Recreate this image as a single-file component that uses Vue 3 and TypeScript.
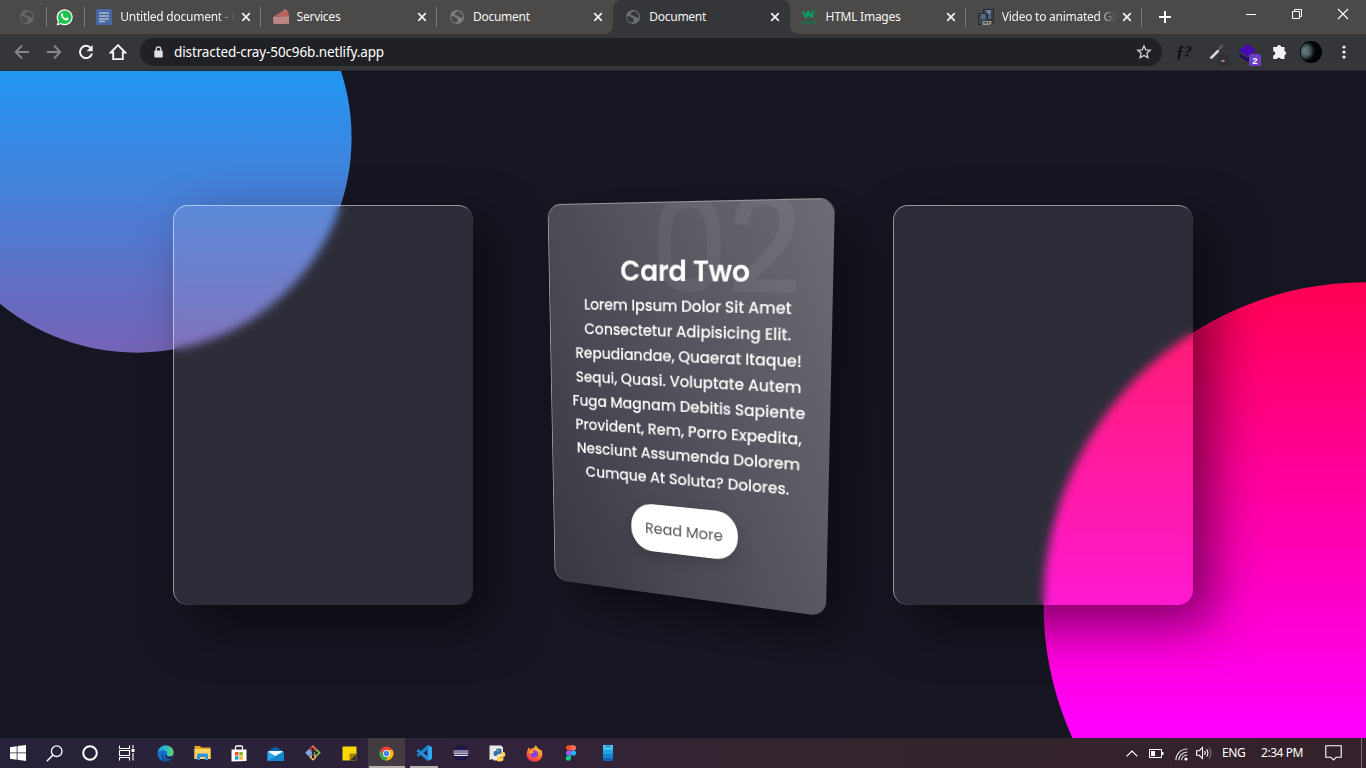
<script setup lang="ts">
interface Tab {
  title: string
  icon: 'docs' | 'cake' | 'globe' | 'w3' | 'film'
  active?: boolean
  divider?: boolean
  fade?: boolean
}

const tabs: Tab[] = [
  { title: 'Untitled document - Google', icon: 'docs', divider: true, fade: true },
  { title: 'Services', icon: 'cake', divider: true },
  { title: 'Document', icon: 'globe' },
  { title: 'Document', icon: 'globe', active: true },
  { title: 'HTML Images', icon: 'w3', divider: true },
  { title: 'Video to animated GIF', icon: 'film', divider: true, fade: true },
]

const lines: string[] = [
  'Lorem Ipsum Dolor Sit Amet',
  'Consectetur Adipisicing Elit.',
  'Repudiandae, Quaerat Itaque!',
  'Sequi, Quasi. Voluptate Autem',
  'Fuga Magnam Debitis Sapiente',
  'Provident, Rem, Porro Expedita,',
  'Nesciunt Assumenda Dolorem',
  'Cumque At Soluta? Dolores.',
]
</script>

<template>
  <div class="screen">
    <header class="tabstrip">
      <div class="pinned divided">
        <svg class="globe dim" width="16" height="16" viewBox="0 0 16 16"><circle cx="8" cy="8" r="7" fill="#696b6e" /><path d="M2.500 7c2 0 2.500 1 4 1.300 1.200.2 1 1.500 2.200 1.700v2.300L7 13.800C4 13.500 2 11 2.200 8zM7 3.200c1-.9 3-.9 4.200-.3L13.600 6v2.700c-1.300.6-2.200 0-2.500-1-1 .2-2.400-.2-2.700-1.200L6 6.200C5.500 5 6 3.800 7 3.200z" fill="#4c4a48" /></svg>
      </div>
      <div class="pinned divided wa">
        <svg width="17" height="17" viewBox="0 0 17 17"><path d="M.6 16.500l1.200-4.100A8 8 0 1 1 4.800 15.300z" fill="#fff" /><circle cx="8.700" cy="8.200" r="6.800" fill="#20c04d" /><path d="M2.200 14.800l.9-3.200 2.400 2.400z" fill="#20c04d" /><path d="M5.600 4.600c.8-.7 1.300-.2 1.600.7.300.8-.3 1-.4 1.400.6 1.300 1.600 2.200 2.900 2.700.5-.3.700-1.100 1.300-.9 1.400.6 1.900.8 1.300 1.900-1 1.600-2.900 1-4.600 0C5.900 9.200 4.100 6.200 5.600 4.600z" fill="#fff" /></svg>
      </div>
      <div v-for="(t, i) in tabs" :key="i" class="tab" :class="{ active: t.active, divided: t.divider }">
        <svg v-if="t.icon === 'docs'" class="fav" width="16" height="16" viewBox="0 0 16 16"><rect width="16" height="16" rx="1" fill="#4767a5" /><path d="M3 4h10M3 7h10M3 10h10M3 12.500h6" stroke="#b0b9c9" stroke-width="1.500" /></svg>
        <svg v-else-if="t.icon === 'cake'" class="fav" width="16" height="16" viewBox="0 0 16 16"><path d="M0 8L11 1l3.500.5L16 6v1z" fill="#b9605d" /><path d="M10.500 1l2.300-.8.700 1.600z" fill="#e1aaa5" /><path d="M0 8l16-1v8H.5z" fill="#b98480" /><path d="M0 9.200l16-.7M.5 12l15.500-.5" stroke="#c4928d" stroke-width=".9" /></svg>
        <svg v-else-if="t.icon === 'globe'" class="fav" width="16" height="16" viewBox="0 0 16 16"><circle cx="8" cy="8" r="7" :fill="t.active ? '#6b6f75' : '#7d7e80'" /><path d="M2.500 7c2 0 2.500 1 4 1.300 1.200.2 1 1.500 2.200 1.700v2.300L7 13.800C4 13.500 2 11 2.200 8zM7 3.200c1-.9 3-.9 4.200-.3L13.600 6v2.700c-1.300.6-2.200 0-2.500-1-1 .2-2.400-.2-2.700-1.200L6 6.200C5.500 5 6 3.800 7 3.200z" :fill="t.active ? '#35363a' : '#4c4a48'" /></svg>
        <svg v-else-if="t.icon === 'w3'" class="fav" width="17" height="17" viewBox="0 0 17 17"><path d="M.8 2.200h2.400l1.600 3.400 1.800-3.400h2l1.500 3.200 1.500-3.200h1.600v7.600h-1.500L11.500 8 9.700 9.900 7.800 7 6 9.900H4.300z" fill="#0a9a63" /><path d="M13.300 1h2.400l-1.200 1.500c1.500.2 1.500 2.300-.9 2" fill="none" stroke="#0a8558" stroke-width=".9" /><text x="0" y="15.600" class="w3word" textLength="16.500" lengthAdjust="spacingAndGlyphs">schools</text></svg>
        <svg v-else class="fav" width="16" height="16" viewBox="0 0 16 16"><rect x="5.500" y=".5" width="10" height="10" fill="#4d6280" stroke="#25272b" /><path d="M7 0v10M14 0v10" stroke="#292b2e" stroke-width="1.800" stroke-dasharray="1.300 .8" /><path d="M8 1h5v4H8z" fill="#6b7f98" /><rect x=".5" y="4.500" width="9" height="11" fill="#536983" stroke="#26282c" /><path d="M2 4v11M8.500 4v7" stroke="#292b2e" stroke-width="1.800" stroke-dasharray="1.300 .8" /><path d="M3 10.500h13V16H3z" fill="#3b3b3d" /><text x="4" y="15.500" class="gifword">GIF</text></svg>
        <span class="title" :class="{ fade: t.fade }">{{ t.title }}</span>
        <svg class="close" width="10" height="10" viewBox="0 0 10 10"><path d="M1.200 1.200l7.600 7.600M8.800 1.200L1.200 8.800" stroke="#f1f1f1" stroke-width="1.700" /></svg>
      </div>
      <svg class="plus" width="14" height="14" viewBox="0 0 14 14"><path d="M7 1v12M1 7h12" stroke="#fff" stroke-width="2" /></svg>
      <div class="winbtns">
        <svg width="12" height="12" viewBox="0 0 12 12"><path d="M1 6.500h10" stroke="#fff" /></svg>
        <svg width="12" height="12" viewBox="0 0 12 12"><path d="M1.500 3.500h7v7h-7zM3.500 3.500v-2h7v7h-2" fill="none" stroke="#fff" /></svg>
        <svg width="12" height="12" viewBox="0 0 12 12"><path d="M1 1l10 10M11 1L1 11" stroke="#fff" stroke-width="1.100" /></svg>
      </div>
    </header>

    <div class="toolbar">
      <div class="nav">
        <svg width="16" height="16" viewBox="0 0 16 16"><path d="M15 8H2M8 1.500L1.700 8 8 14.500" fill="none" stroke="#86888a" stroke-width="1.800" /></svg>
        <svg width="16" height="16" viewBox="0 0 16 16"><path d="M1 8h13M8 1.500L14.300 8 8 14.500" fill="none" stroke="#86888a" stroke-width="1.800" /></svg>
        <svg width="16" height="16" viewBox="0 0 16 16"><path d="M13.200 4.600A6.100 6.100 0 1 0 14 9.500" fill="none" stroke="#f1f3f4" stroke-width="2" /><path d="M14.700 1v6.200H8.500z" fill="#f1f3f4" /></svg>
        <svg width="18" height="18" viewBox="0 0 18 18"><path d="M1.800 9.500L9 2l7.200 7.500h-2.400v6.600H4.200V9.500z" fill="none" stroke="#f1f3f4" stroke-width="1.900" /></svg>
      </div>
      <div class="omnibox">
        <svg class="lock" width="9" height="12" viewBox="0 0 9 12"><rect x=".3" y="4.500" width="8.400" height="7" rx=".8" fill="#dfe1e5" /><path d="M2.200 5V3.200a2.300 2.300 0 0 1 4.600 0V5" fill="none" stroke="#dfe1e5" stroke-width="1.300" /></svg>
        <span class="url">distracted-cray-50c96b.netlify.app</span>
        <svg class="star" width="16" height="16" viewBox="0 0 16 16"><path d="M8 1.900l1.800 4 4.400.4-3.300 2.900 1 4.400L8 11.400l-3.900 2.200 1-4.400-3.300-2.900 4.400-.4z" fill="none" stroke="#d2d4d7" stroke-width="1.300" /></svg>
      </div>
      <div class="exts">
        <span class="fq">ƒ?</span>
        <svg class="picker" width="21" height="22" viewBox="0 0 21 22"><path d="M2 13.500L10.500 5l1.500 1.500L3.500 15z" fill="#e6e6e2" stroke="#bdbdb7" stroke-width=".8" /><path d="M9.500 4l3.500 3.500" stroke="#202124" stroke-width="1.600" /><path d="M11.500 4.500L14 1.800" stroke="#55585c" stroke-width="3" stroke-linecap="round" /><rect x="9.500" y="11" width="11.500" height="11" rx="1" fill="#303134" /><path d="M13.500 17h3" stroke="#f5d0d0" stroke-width="1.200" /><path d="M15.200 17h1.300" stroke="#e33" stroke-width="1.200" /></svg>
        <svg class="layers" width="23" height="23" viewBox="0 0 23 23"><path d="M1.500 10.500l8 5 8-5v3l-8 5-8-5z" fill="#210075" /><path d="M9.500 1L18 7.500l-8.500 6L1 7.500z" fill="#4709b2" /><rect x="11" y="11" width="12" height="12" rx="1.500" fill="#6c3cc4" /><text x="14.200" y="20.500" class="badge">2</text></svg>
        <svg class="puzzle" width="16" height="16" viewBox="0 0 16 16"><path d="M5 3a2.100 2.100 0 0 1 4.200 0h3.300v3.900a2.200 2.200 0 0 1 0 4.300v3.900H8.900a2 2 0 0 0-3.900 0H1.200v-3.700a2.100 2.100 0 0 0 0-4.200V3z" fill="#f1f3f4" /></svg>
        <svg class="avatar" width="22" height="22" viewBox="0 0 22 22"><defs><radialGradient id="planet" cx=".2" cy=".45" r=".6"><stop offset="0" stop-color="#64808a" /><stop offset=".5" stop-color="#3b535a" /><stop offset=".8" stop-color="#0b1113" /><stop offset="1" stop-color="#020303" /></radialGradient></defs><circle cx="11" cy="11" r="11" fill="#020303" /><circle cx="10.500" cy="11" r="9.800" fill="url(#planet)" /><path d="M3 8c3-1.500 5 0 7-2M3 12c3 0 5 2 8 1" fill="none" stroke="#8a7a58" stroke-width=".9" opacity=".7" /></svg>
        <svg class="dots" width="4" height="16" viewBox="0 0 4 16"><circle cx="2" cy="3" r="1.600" fill="#f1f3f4" /><circle cx="2" cy="8" r="1.600" fill="#f1f3f4" /><circle cx="2" cy="13" r="1.600" fill="#f1f3f4" /></svg>
      </div>
    </div>

    <main class="page">
      <div class="card"></div>
      <div class="card tilted">
        <div class="content">
          <h2>02</h2>
          <h3>Card Two</h3>
          <p><span v-for="l in lines" :key="l">{{ l }}</span></p>
          <a>Read More</a>
        </div>
        <div class="glare"><div class="glare-inner"></div></div>
      </div>
      <div class="card"></div>
    </main>

    <footer class="taskbar">
      <div class="sys">
        <span><svg width="16" height="16" viewBox="0 0 16 16"><path d="M0 2.200L6.700 1.200v6.300H0zM7.500 1.100L16 0v7.500H7.500zM0 8.300h6.700v6.400L0 13.800zM7.500 8.300H16V16l-8.500-1.200z" fill="#fff" /></svg></span>
        <span><svg width="17" height="17" viewBox="0 0 17 17"><circle cx="10.700" cy="6.200" r="5.300" fill="none" stroke="#fff" stroke-width="1.300" /><path d="M7 10L.8 16.200" stroke="#fff" stroke-width="1.500" /></svg></span>
        <span><svg width="16" height="16" viewBox="0 0 16 16"><circle cx="8" cy="8" r="6.800" fill="none" stroke="#fff" stroke-width="2" /></svg></span>
        <span><svg width="17" height="16" viewBox="0 0 17 16"><path d="M1.500.5v3h10v-3M1.500 15.500v-3h10v3M1.500 5.500h10v5h-10zM15 0v3.500M15 8v7.500" fill="none" stroke="#fff" stroke-width="1.100" /><rect x="13.500" y="4" width="3" height="3" fill="#fff" /></svg></span>
      </div>
      <div class="apps">
        <span><svg width="17" height="17" viewBox="0 0 17 17"><defs><linearGradient id="eg" x2="1"><stop stop-color="#1b9ee8" /><stop offset=".6" stop-color="#35c1c0" /><stop offset="1" stop-color="#64dc4c" /></linearGradient></defs><circle cx="8.500" cy="8.500" r="8" fill="#1373c9" /><path d="M.6 7.500C1.500 3 5 .4 8.800.4c4.700 0 7.800 3.400 7.800 6.800 0 3-2.300 4-4.100 4-2 0-3-.8-2.700-1.300.9-1 .8-4.700-3.300-4.700-3 0-5 1.200-5.900 2.300z" fill="url(#eg)" /><path d="M6.500 6.600c-1.300 1.600-1 4.700.9 6.400 2 1.800 4.800 1.800 7.300.6-2 2.600-5 3.200-7.700 2.700C3.800 14.500 3.500 8.500 6.500 6.600z" fill="#0c4fa0" /><path d="M9.800 9.900c-.6 1.600 2.300 2.600 5.500 1.200l1 .5-1.600 2C11 15 7.500 12.500 8 9.500z" fill="#29223a" /></svg></span>
        <span><svg width="17" height="16" viewBox="0 0 17 16"><path d="M.5 1h5.500l1.500 1.500h9V14H.5z" fill="#e7a626" /><path d="M.5 4h16v10H.5z" fill="#fcd462" /><path d="M3 15V9.500l1-1h9l1 1V15h-3v-3H6v3z" fill="#3592dd" /></svg></span>
        <span><svg width="16" height="17" viewBox="0 0 16 17"><path d="M4.500 5V2a1 1 0 0 1 1-1h5a1 1 0 0 1 1 1v3" fill="none" stroke="#fff" stroke-width="1.300" /><path d="M.5 4.500h15V16l-15 .5z" fill="#fff" /><path d="M4 7h3.500v3.500H4z" fill="#e9502b" /><path d="M8.300 7h3.500v3.500H8.300z" fill="#7cb519" /><path d="M4 11.200h3.500v3.500H4z" fill="#19a0e2" /><path d="M8.300 11.200h3.500v3.500H8.300z" fill="#f8b41c" /></svg></span>
        <span><svg width="17" height="15" viewBox="0 0 17 15"><path d="M.5 5.500L8.500.5l8 5v9H.5z" fill="#0e5ea8" /><path d="M1.500 5h14v5l-7 2-7-2z" fill="#f1f7fb" /><path d="M.5 5.500l8 4.500 8-4.500V15H.5z" fill="#28a8ea" /><path d="M16.500 5.500V15H.5z" fill="#1485d2" /></svg></span>
        <span><svg width="16" height="16" viewBox="0 0 16 16"><path d="M8 0l3.800 3.800L8 7.600 4.200 3.800z" fill="#e4604c" /><path d="M4 4l3.800 3.800L4 11.600.2 7.800z" fill="#7ca9e9" /><path d="M12 4l3.800 3.800L12 11.600 8.200 7.800z" fill="#83bd57" /><path d="M8 8.200l3.800 3.800L8 15.800 4.200 12z" fill="#f6d27a" /><path d="M8 3v9M8 5l4 3M6 3l2 2" stroke="#251b23" stroke-width="1.500" /><circle cx="8" cy="12" r="1.500" fill="#251b23" /><circle cx="11.500" cy="8" r="1.400" fill="#251b23" /></svg></span>
        <span><svg width="15" height="15" viewBox="0 0 15 15"><path d="M.5.5h14v14H.5z" fill="#ffd704" /><path d="M7.500 14.500h7v-7z" fill="#37332c" /><path d="M7.500 14.500v-7h7z" fill="#a87c08" /></svg></span>
        <span class="open current"><svg width="15" height="15" viewBox="0 0 15 15"><circle cx="7.500" cy="7.500" r="7" fill="#ea4335" /><path d="M1.400 4a7 7 0 0 0 5.200 10.400L10.400 9 4.500 9.200z" fill="#34a853" /><path d="M7.500 4h6a7 7 0 0 1-6.900 10.400L10.500 9z" fill="#fbbc05" /><circle cx="7.500" cy="7.500" r="3.500" fill="#fff" /><circle cx="7.500" cy="7.500" r="2.700" fill="#4285f4" /></svg></span>
        <span class="open narrow"><svg width="16" height="16" viewBox="0 0 16 16"><path d="M11.500 0L16 2v12l-4.500 2z" fill="#2fa7f0" /><path d="M11.500 0L.5 10l1.500 2L12 4.500z" fill="#1583d0" /><path d="M11.500 16L.5 6 2 4l10 7.500z" fill="#1d8fdd" /></svg></span>
        <span><svg width="16" height="16" viewBox="0 0 16 16"><circle cx="8" cy="8" r="7" fill="#231a52" stroke="#151033" stroke-width="1.200" /><path d="M.5 6h15M.5 8.200h15M1 10.400h14" stroke="#e6e3ef" stroke-width="1.200" /></svg></span>
        <span><svg width="17" height="17" viewBox="0 0 17 17"><path d="M.5.500H12l2 2V13l-3-1-2 3.500H5L3.500 14l-3 1z" fill="#e9e9e6" /><path d="M7 4.500c0-1.500 5.500-1.500 5.500 0V8c0 1.500-5 .5-5 3H6c-2-.5-2-5 0-5h4V5.500H7z" fill="#3571a1" /><path d="M11 16.500c-2 0-3-.5-3-1.500v-2.500c0-2 5-.5 5-3V7h1.500C17 7.500 17 12 14.500 12H11.500v.8h3v1.500c0 1.500-1.500 2.200-3.500 2.200z" fill="#ffd343" /></svg></span>
        <span><svg width="17" height="17" viewBox="0 0 17 17"><defs><linearGradient id="ff" x1=".8" y1="0" x2=".2" y2="1"><stop stop-color="#ffdc37" /><stop offset=".5" stop-color="#ff782a" /><stop offset="1" stop-color="#f3255d" /></linearGradient></defs><path d="M9.500.3c1.200 1.200 2 2 2.300 3.200 1.500.3 2.300 1 3 2.200l.2-1.500C18 9 16 16.500 8.500 16.500.5 16.500-1 9 2 4.200l.3-2 2 2C6 3 8.500 4 9.500.3z" fill="url(#ff)" /><circle cx="8.300" cy="9" r="3.600" fill="#8640de" /><path d="M3 6.500c2-1.300 3.800-.5 5 .7-1 .6-2.500.6-3.300 1.700-.7-.5-1.600-.5-1.700-2.400z" fill="#ffab29" /></svg></span>
        <span><svg width="12" height="16" viewBox="0 0 12 16"><path d="M6 .3H3.500a2.500 2.500 0 0 0 0 5.100H6z" fill="#f24e1e" /><path d="M6 .3h2.500a2.500 2.500 0 0 1 0 5.100H6z" fill="#ff7262" /><path d="M6 5.400H3.500a2.500 2.500 0 0 0 0 5.100H6z" fill="#a259ff" /><circle cx="8.500" cy="7.950" r="2.550" fill="#1abcfe" /><path d="M6 10.500H3.500A2.600 2.600 0 1 0 6 13.100z" fill="#0acf83" /></svg></span>
        <span><svg width="10" height="16" viewBox="0 0 10 16"><path d="M0 0h10v16H0z" fill="#1aa3e6" /><path d="M0 0h10v5H0z" fill="#43c4f5" /><path d="M0 9h10v4H0z" fill="#1786d1" /><path d="M0 13h10v3H0z" fill="#1062ad" /><path d="M3 1.500h4" stroke="#1679b6" /></svg></span>
      </div>
      <div class="tray">
        <svg class="chev" width="12" height="7" viewBox="0 0 12 7"><path d="M.6 6.400L6 1l5.400 5.400" fill="none" stroke="#fff" stroke-width="1.200" /></svg>
        <svg class="batt" width="15" height="9" viewBox="0 0 15 9"><path d="M.5.5h12v8H.5z" fill="none" stroke="#fff" /><path d="M2 2h4v5H2zM13 3h1.500v3H13z" fill="#fff" /></svg>
        <svg class="wifi" width="13" height="13" viewBox="0 0 13 13"><g fill="none" stroke="#dcd8da" stroke-width="1.100"><path d="M.8 12.300C1 6 5.500 1.200 12.300 1M3.700 12.300C4 7.700 7.300 4.200 12.300 4M6.500 12.300C6.700 9.300 9 7.200 12.300 7" /></g><circle cx="11" cy="11" r="1.600" fill="#fff" /></svg>
        <svg class="vol" width="16" height="14" viewBox="0 0 16 14"><path d="M.6 4.700h2.600L6.500 1.500v11L3.200 9.300H.6z" fill="none" stroke="#fff" stroke-width="1.100" /><path d="M8.500 5c.8 1 .8 3 0 4M10.600 3.300c1.700 2 1.700 5.400 0 7.400" fill="none" stroke="#fff" stroke-width="1.100" /><path d="M13 1.500c2.600 3 2.600 8 0 11" fill="none" stroke="#85777c" stroke-width="1.100" /></svg>
        <span class="lang">ENG</span>
        <span class="time">2:34 PM</span>
        <svg class="note" width="17" height="16" viewBox="0 0 17 16"><path d="M.8.800h15.400v11.400h-5L8.500 15l-2.700-2.800h-5z" fill="none" stroke="#fff" stroke-width="1.100" /></svg>
        <i class="peek"></i>
      </div>
    </footer>
  </div>
</template>

<style>
body {
  margin: 0;
  overflow: hidden;
}
</style>

<style scoped>
.screen {
  width: 1366px;
  height: 768px;
  display: flex;
  flex-direction: column;
  overflow: hidden;
  font-family: "Segoe UI", "Noto Sans", sans-serif;
}
svg {
  display: block;
  flex: none;
}
.tabstrip {
  height: 34px;
  flex: none;
  background: #4c4a48;
  display: flex;
  padding-left: 8.500px;
}
.pinned {
  width: 38px;
  height: 34px;
  box-sizing: border-box;
  display: flex;
  align-items: center;
  justify-content: center;
}
.pinned:first-child {
  padding-right: 1px;
}
.wa {
  padding-right: 2px;
}
.dim {
  opacity: 0.9;
}
.divided {
  background: linear-gradient(#7c7b79, #7c7b79) right 7px / 1px 20px no-repeat;
}
.tab {
  width: 176.300px;
  height: 34px;
  box-sizing: border-box;
  flex: none;
  display: flex;
  align-items: center;
  padding: 0 10px 0 11.800px;
  position: relative;
}
.tab.active {
  background: #35363a;
  border-radius: 8px 8px 0 0;
}
.tab.active::before,
.tab.active::after {
  content: "";
  position: absolute;
  bottom: 0;
  width: 8px;
  height: 8px;
}
.tab.active::before {
  left: -8px;
  background: radial-gradient(circle at 0 0, transparent 7.500px, #35363a 8px);
}
.tab.active::after {
  right: -8px;
  background: radial-gradient(circle at 100% 0, transparent 7.500px, #35363a 8px);
}
.fav {
  margin-right: 8px;
  width: 16px;
  height: 16px;
}
.title {
  flex: 1;
  min-width: 0;
  overflow: hidden;
  white-space: nowrap;
  color: #f4f4f4;
  font-size: 12px;
  line-height: 18px;
  letter-spacing: -0.250px;
}
.title.fade {
  -webkit-mask-image: linear-gradient(90deg, #000 84%, transparent 100%);
  mask-image: linear-gradient(90deg, #000 84%, transparent 100%);
}
.close {
  margin-left: 6px;
}
.w3word {
  font: 700 5px "Noto Sans", sans-serif;
  fill: #0a7a51;
}
.gifword {
  font: 700 6px "Noto Sans", sans-serif;
  fill: #b9b9b9;
}
.plus {
  margin: 10px 0 0 15.500px;
}
.winbtns {
  margin-left: auto;
  display: flex;
  gap: 34px;
  padding: 8px 17px 0 0;
}
.toolbar {
  height: 37px;
  flex: none;
  box-sizing: border-box;
  background: #35363a;
  border-bottom: 1px solid #292a2e;
  display: flex;
  align-items: center;
}
.nav {
  width: 140px;
  box-sizing: border-box;
  padding-left: 14px;
  display: flex;
  align-items: center;
  gap: 16px;
}
.nav svg:last-child {
  margin-left: -1px;
}
.omnibox {
  width: 1022px;
  height: 28px;
  box-sizing: border-box;
  border-radius: 14px;
  background: #202124;
  display: flex;
  align-items: center;
  padding: 0 10px 0 13.500px;
}
.url {
  margin-left: 11.500px;
  color: #fff;
  font-size: 13.500px;
  line-height: 20px;
  letter-spacing: -0.120px;
}
.star {
  margin-left: auto;
}
.exts {
  flex: 1;
  display: flex;
  align-items: center;
}
.fq {
  width: 20px;
  margin-left: 14px;
  font: italic 700 16px/20px "Liberation Serif", serif;
  color: #0d0d0e;
}
.picker {
  margin: 5px 0 0 12px;
}
.layers {
  margin: 5px 0 0 9px;
}
.badge {
  font: 700 9.500px "Liberation Sans", sans-serif;
  fill: #fff;
}
.puzzle {
  margin-left: 10.500px;
}
.avatar {
  margin-left: 12.500px;
}
.dots {
  margin-left: 19.500px;
}

.page {
  position: relative;
  height: 667px;
  flex: none;
  box-sizing: border-box;
  padding-top: 1px;
  background: #161623;
  overflow: hidden;
  display: flex;
  justify-content: center;
  align-items: center;
  gap: 60px;
}
.page::before,
.page::after {
  content: "";
  position: absolute;
  inset: 0;
}
.page::before {
  background: linear-gradient(#f00, #f0f);
  clip-path: circle(30% at right 80%);
}
.page::after {
  background: linear-gradient(#2196f3, #e91e63);
  clip-path: circle(20% at 10% 10%);
}
.card {
  position: relative;
  z-index: 1;
  width: 300px;
  height: 400px;
  box-sizing: border-box;
  flex: none;
  border-radius: 15px;
  background: rgba(255, 255, 255, 0.1);
  box-shadow: 20px 20px 50px rgba(0, 0, 0, 0.5);
  border-top: 1px solid rgba(255, 255, 255, 0.5);
  border-left: 1px solid rgba(255, 255, 255, 0.5);
  backdrop-filter: blur(5px);
  overflow: hidden;
}
.tilted {
  transform: perspective(1000px) rotateX(-8.400deg) rotateY(-22deg);
}
.content {
  height: 100%;
  display: flex;
  flex-direction: column;
  align-items: center;
  text-align: center;
  font-family: Poppins, Inter, sans-serif;
  color: #fff;
}
h2 {
  position: absolute;
  top: -37px;
  right: 31px;
  margin: 0;
  font-size: 128px;
  line-height: 160px;
  font-weight: 500;
  letter-spacing: -1px;
  color: rgba(255, 255, 255, 0.055);
}
h3 {
  margin: 45px 0 0;
  font-size: 28.800px;
  line-height: 43px;
  font-weight: 600;
  letter-spacing: -0.250px;
}
p {
  margin: 0;
  font-size: 16px;
  line-height: 25px;
  font-weight: 500;
  letter-spacing: -0.100px;
}
p span {
  display: block;
  white-space: nowrap;
}
a {
  margin-top: 15.500px;
  width: 117px;
  height: 50px;
  border-radius: 24px;
  background: #fff;
  color: #3a3a3a;
  font-size: 16px;
  line-height: 51px;
  box-shadow: 0 5px 15px rgba(0, 0, 0, 0.3);
}
.glare {
  position: absolute;
  inset: 0;
  overflow: hidden;
  pointer-events: none;
}
.glare-inner {
  position: absolute;
  top: 50%;
  left: 50%;
  width: 600px;
  height: 600px;
  transform: rotate(66deg) translate(-50%, -50%);
  transform-origin: 0 0;
  background: linear-gradient(0deg, rgba(255, 255, 255, 0), #fff);
  opacity: 0.340;
}

.taskbar {
  height: 30px;
  flex: none;
  display: flex;
  background: linear-gradient(90deg, #272239 0%, #2c223a 28%, #31233a 38%, #34242f 55%, #33222b 100%);
}
.sys,
.apps {
  display: flex;
}
.sys span,
.apps span {
  height: 30px;
  box-sizing: border-box;
  display: flex;
  align-items: center;
  justify-content: center;
}
.sys span {
  width: 36px;
}
.apps {
  margin-left: 2.600px;
}
.apps span {
  width: 36.950px;
}
.apps .current {
  background: linear-gradient(#b5aeab, #b5aeab) bottom / 36px 2px no-repeat, #423c42;
}
.apps .narrow {
  background: linear-gradient(#b5aeab, #b5aeab) bottom / 28px 2px no-repeat;
}
.tray {
  margin-left: auto;
  display: flex;
  align-items: center;
  color: #fff;
  font-size: 12px;
  line-height: 30px;
  white-space: nowrap;
}
.batt {
  margin-left: 11px;
}
.wifi {
  margin: 2px 0 0 11px;
}
.vol {
  margin-left: 8px;
}
.lang {
  width: 24px;
  margin-left: 10px;
  letter-spacing: -0.450px;
}
.time {
  width: 43px;
  margin-left: 15px;
  letter-spacing: -0.450px;
}
.note {
  margin-left: 21px;
}
.peek {
  width: 1px;
  height: 30px;
  margin: 0 4px 0 19px;
  background: #75696e;
}
</style>
